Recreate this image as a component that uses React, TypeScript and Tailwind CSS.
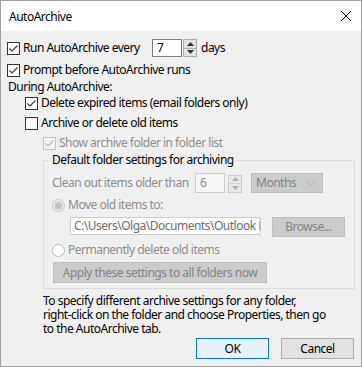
import React from "react";

const font = { fontFamily: '"Noto Sans", "Segoe UI", sans-serif' };

function Check({ checked, disabled }: { checked?: boolean; disabled?: boolean }) {
  return (
    <span
      className={`w-[13px] h-[13px] border shrink-0 flex items-center justify-center ${
        disabled ? "border-[#c4c4c4] bg-[#f4f4f4]" : "border-[#333333] bg-white"
      }`}
    >
      {checked && (
        <svg width="11" height="11" viewBox="0 0 11 11">
          <path
            d="M1.5 5.5 L4 8 L9.5 2.5"
            fill="none"
            stroke={disabled ? "#b5b5b5" : "#333333"}
            strokeWidth="1.1"
          />
        </svg>
      )}
    </span>
  );
}

function Radio({ checked }: { checked?: boolean }) {
  return (
    <span
      className={`w-[13px] h-[13px] rounded-full border shrink-0 flex items-center justify-center ${
        checked ? "border-[#cccccc] bg-[#e6e6e6]" : "border-[#bcbcbc] bg-white"
      }`}
    >
      {checked && <span className="w-[7px] h-[7px] rounded-full bg-[#c2c2c2]" />}
    </span>
  );
}

function Spin({ disabled }: { disabled?: boolean }) {
  const c = disabled ? "#b0b0b0" : "#333333";
  const box = disabled ? "border-[#cfcfcf] bg-[#e8e8e8]" : "border-[#adadad] bg-[#e1e1e1]";
  return (
    <div className="flex flex-col w-[14px] h-[18px]">
      <div className={`flex-1 border ${box} flex items-center justify-center`}>
        <svg width="7" height="4" viewBox="0 0 7 4">
          <path d="M0 4 L3.5 0 L7 4 Z" fill={c} />
        </svg>
      </div>
      <div className={`flex-1 border border-t-0 ${box} flex items-center justify-center`}>
        <svg width="7" height="4" viewBox="0 0 7 4">
          <path d="M0 0 L3.5 4 L7 0 Z" fill={c} />
        </svg>
      </div>
    </div>
  );
}

export default function App() {
  return (
    <div
      className="w-[362px] h-[367px] border border-[#a0a0a0] bg-[#f0f0f0] flex flex-col text-[12px] tracking-[-0.5px] text-black overflow-hidden whitespace-nowrap"
      style={font}
    >
      <div className="h-[30px] bg-white flex items-center justify-between shrink-0">
        <span className="pl-[8px] text-[12px] leading-none mt-[1px]">AutoArchive</span>
        <svg width="12" height="12" viewBox="0 0 12 12" className="mr-[9px]">
          <path d="M1 1 L11 11 M11 1 L1 11" stroke="#000" strokeWidth="1" />
        </svg>
      </div>

      <div className="flex flex-col pl-[6px] pr-[6px] leading-[16px]">
        <div className="mt-[8px] h-[18px] flex items-center">
          <Check checked />
          <span className="ml-[3px] w-[129px] shrink-0">Run AutoArchive every</span>
          <div className="w-[30px] h-[18px] border border-[#7a7a7a] bg-white flex items-center pl-[4px] shrink-0">7</div>
          <div className="ml-[1px]">
            <Spin />
          </div>
          <span className="ml-[4px]">days</span>
        </div>

        <div className="mt-[4px] h-[18px] flex items-center">
          <Check checked />
          <span className="ml-[3px]">Prompt before AutoArchive runs</span>
        </div>

        <div className="h-[16px] flex items-center pl-[1px]">During AutoArchive:</div>

        <div className="h-[16px] flex items-center pl-[18px]">
          <Check checked />
          <span className="ml-[3px]">Delete expired items (email folders only)</span>
        </div>

        <div className="mt-[4px] h-[16px] flex items-center pl-[18px]">
          <Check />
          <span className="ml-[3px]">Archive or delete old items</span>
        </div>

        <div className="mt-[4px] h-[16px] flex items-center pl-[36px] text-[#8d8d8d]">
          <Check checked disabled />
          <span className="ml-[3px]">Show archive folder in folder list</span>
        </div>

        <fieldset className="ml-[36px] w-[312px] h-[137px] border border-[#dcdcdc] mt-[1px] pl-[8px] pr-[8px]">
          <legend className="-ml-[1px] px-[1px] leading-[16px] text-black">
            Default folder settings for archiving
          </legend>

          <div className="mt-[5px] h-[20px] flex items-center text-[#8d8d8d]">
            <span className="w-[143px] shrink-0">Clean out items older than</span>
            <div className="w-[30px] h-[20px] border border-[#cccccc] bg-[#f7f7f7] flex items-center pl-[4px] shrink-0">6</div>
            <div className="ml-[3px] mt-[1px]">
              <Spin disabled />
            </div>
            <div className="ml-[9px] w-[72px] h-[20px] shrink-0 border border-[#bfbfbf] bg-[#cccccc] flex items-center justify-between pl-[4px] pr-[6px] text-[#838383]">
              <span>Months</span>
              <svg width="9" height="5" viewBox="0 0 9 5">
                <path d="M0.5 0.5 L4.5 4.5 L8.5 0.5" fill="none" stroke="#a8a8a8" strokeWidth="1" />
              </svg>
            </div>
          </div>

          <div className="mt-[4px] h-[16px] flex items-center text-[#8d8d8d]">
            <Radio checked />
            <span className="ml-[3px]">Move old items to:</span>
          </div>

          <div className="mt-[4px] h-[20px] flex items-start pl-[18px]">
            <div className="w-[191px] h-[18px] shrink-0 border border-[#cccccc] bg-white flex items-center pl-[3px] overflow-hidden text-[#6d6d6d]">
              <span className="overflow-hidden">C:\Users\Olga\Documents\Outlook Files</span>
            </div>
            <div className="ml-[11px] w-[73px] h-[20px] shrink-0 border border-[#bfbfbf] bg-[#cccccc] flex items-center justify-center text-[#838383]">
              Browse...
            </div>
          </div>

          <div className="mt-[5px] h-[16px] flex items-center text-[#8d8d8d]">
            <Radio />
            <span className="ml-[3px]">Permanently delete old items</span>
          </div>

          <div className="mt-[4px] ml-[1px] w-[214px] h-[21px] border border-[#bfbfbf] bg-[#cccccc] flex items-center justify-center text-[#838383]">
            Apply these settings to all folders now
          </div>
        </fieldset>

        <div className="mt-[5px] pl-[36px] leading-[14px]">
          To specify different archive settings for any folder,
          <br />
          right-click on the folder and choose Properties, then go
          <br />
          to the AutoArchive tab.
        </div>

        <div className="mt-[2px] flex justify-end gap-[12px] pr-[1px]">
          <div className="w-[73px] h-[21px] border border-[#0078d7] bg-[#e5f1fb] flex items-center justify-center">OK</div>
          <div className="w-[73px] h-[21px] border border-[#adadad] bg-[#e1e1e1] flex items-center justify-center">Cancel</div>
        </div>
      </div>
    </div>
  );
}
